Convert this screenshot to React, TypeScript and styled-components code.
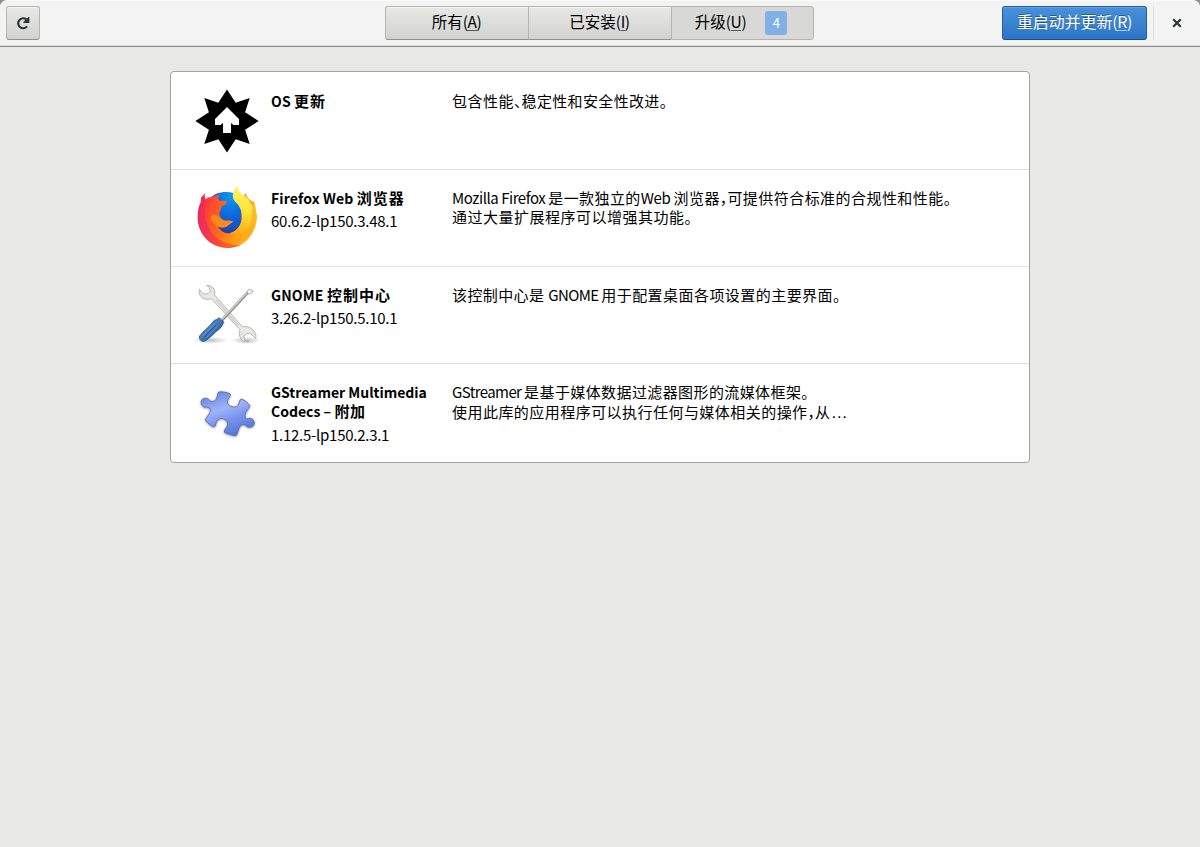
import React from "react";
import styled, { createGlobalStyle, css } from "styled-components";

const Global = createGlobalStyle`
  html, body { margin: 0; height: 100%; }
  body {
    background: #e8e8e6;
    color: #000;
    font-family: "Noto Sans CJK SC", sans-serif;
    font-size: 15px;
    overflow: hidden;
  }
  #root { height: 100%; }
  * { box-sizing: border-box; }
`;

const Window = styled.div`
  display: flex;
  flex-direction: column;
  height: 847px;
  background: #8f9190;
`;

const HeaderBar = styled.header`
  display: grid;
  grid-template-columns: 379px 429px 1fr;
  align-items: start;
  height: 47px;
  padding: 5px 6px 0;
  border-top: 1px solid #fafafa;
  border-bottom: 1px solid #8d8f8b;
  border-radius: 7px 7px 0 0;
  background: #f3f3f3;
  box-shadow: inset 0 -1px #dededc;
`;

const raised = css`
  border: 1px solid #b4b4b0;
  border-bottom-color: #8f918d;
  background: linear-gradient(#e8e8e7, #d2d2d0);
  box-shadow: inset 0 1px #f6f6f6;
`;

const RefreshButton = styled.button`
  ${raised}
  display: flex;
  align-items: center;
  justify-content: center;
  width: 34px;
  height: 34px;
  padding: 0 1px 0 0;
  border-radius: 3px;
`;

const Switcher = styled.nav`
  display: flex;
  height: 34px;
`;

const Tab = styled.button<{ $active?: boolean }>`
  ${raised}
  flex: 0 0 143px;
  display: flex;
  align-items: center;
  justify-content: center;
  gap: 19px;
  padding: 0 1px 5px 0;
  color: #000;
  font: inherit;
  font-size: 15.5px;
  line-height: 20px;
  border-right-width: 0;
  &:first-child { border-radius: 3px 0 0 3px; }
  &:last-child { border-radius: 0 3px 3px 0; border-right-width: 1px; }
  ${(p) => p.$active && css`
    background: #d8d8d6;
    border-color: #b4b4b0;
    box-shadow: none;
    padding-right: 3px;
  `}
`;

const Mnemonic = styled.span`
  letter-spacing: -0.4px;
  u {
    text-decoration: none;
    box-shadow: 0 1px color-mix(in srgb, currentColor 60%, transparent);
    display: inline-block;
    line-height: 17px;
  }
`;

const Count = styled.span`
  display: flex;
  align-items: center;
  justify-content: center;
  width: 22px;
  height: 24px;
  margin-top: 5px;
  border-radius: 3px;
  background: #80b0e6;
  color: #fff;
  font-size: 13px;
`;

const HeaderEnd = styled.div`
  display: flex;
  justify-content: flex-end;
`;

const SuggestedButton = styled.button`
  width: 145px;
  height: 34px;
  padding: 0 0 2px;
  border: 1px solid #1d5fa9;
  border-bottom-color: #184f8c;
  border-radius: 3px;
  background: linear-gradient(#4a90d9, #2a76c6);
  box-shadow: inset 0 1px #5f9fe0;
  color: #fff;
  font: inherit;
  font-size: 15.9px;
  line-height: 20px;
  text-shadow: 0 -1px rgba(0, 0, 0, 0.35);
`;

const CloseArea = styled.div`
  display: flex;
  align-items: center;
  justify-content: center;
  width: 41px;
  height: 34px;
  margin-left: 6px;
  padding-left: 5px;
  border-left: 1px solid #dcdcda;
`;

const Content = styled.main`
  flex: 1;
  padding-top: 24px;
  background: #e8e8e6;
`;

const UpdateList = styled.ul`
  width: 860px;
  margin: 0 auto;
  padding: 0;
  list-style: none;
  border: 1px solid #a3a3a0;
  border-radius: 4px;
  background: #fff;
`;

const Row = styled.li`
  display: grid;
  grid-template-columns: 64px 169px 1fr;
  column-gap: 12px;
  height: 97px;
  padding: 16px 24px 0;
  border-bottom: 1px solid #e0e0de;
  &:first-child { height: 98px; padding-top: 17px; }
  &:last-child { height: 98px; border-bottom: 0; }
`;

const Info = styled.div`
  padding-top: 2px;
`;

const Line = styled.div<{ $height?: number }>`
  height: ${(p) => p.$height ?? 19}px;
`;

const Name = styled.h2`
  margin: 0;
  font-size: 15px;
  font-weight: 700;
  line-height: 19px;
  white-space: pre;
  ${Line} + ${Line} { height: 20px; }
`;

const Version = styled.p`
  margin: 4px 0 0;
  font-size: 15px;
  line-height: 20px;
  letter-spacing: -0.26px;
`;

const Summary = styled.div`
  padding-top: 2px;
  line-height: 19.5px;
  white-space: pre;
`;

const Run = styled.span<{ $track?: number; $size?: number }>`
  letter-spacing: ${(p) => p.$track ?? 0}px;
  ${(p) => p.$size && css`font-size: ${p.$size}px;`}
`;

const Ellipsis = styled.span`
  font-family: "Liberation Sans", sans-serif;
  font-size: 17px;
  line-height: 1;
`;

const Icon = styled.svg`
  display: block;
  width: 64px;
  height: 64px;
`;

const UpdateIcon = () => (
  <Icon viewBox="0 0 64 64">
    <path d="M32 .6 40.7 13.7 54.7 9.1 50.1 23.3 63.6 32 50.1 40.7 54.7 54.9 40.7 50.3 32 63.6 23.3 50.3 9.3 54.9 13.9 40.7 .4 32 13.9 23.3 9.3 9.1 23.3 13.7Z" />
    <path fill="#fff" d="M32 18 44 30V36H38.5L36 34V44H28V34L25.5 36H20V30Z" />
  </Icon>
);

const FirefoxIcon = () => (
  <Icon viewBox="15 18 192 192">
    <defs>
      <linearGradient id="ffBody" x1="0" y1="0.3" x2="0.95" y2="0.6">
        <stop offset="0" stopColor="#f0254e" />
        <stop offset=".2" stopColor="#ff4a30" />
        <stop offset=".45" stopColor="#ff6a1c" />
        <stop offset=".75" stopColor="#ff9a10" />
        <stop offset="1" stopColor="#ffbd1c" />
      </linearGradient>
      <linearGradient id="ffEdge" x1="0" y1="0" x2="0.7" y2="1">
        <stop offset="0" stopColor="#e31587" stopOpacity="0" />
        <stop offset=".45" stopColor="#e31587" stopOpacity=".5" />
        <stop offset="1" stopColor="#ff0b50" stopOpacity=".4" />
      </linearGradient>
      <radialGradient id="ffGlobe" cx=".6" cy=".1" r=".95">
        <stop offset="0" stopColor="#0f98f0" />
        <stop offset=".4" stopColor="#0a70e0" />
        <stop offset=".75" stopColor="#1b4fc4" />
        <stop offset="1" stopColor="#2b2a7c" />
      </radialGradient>
      <linearGradient id="ffTail" x1=".4" y1="0" x2=".3" y2="1">
        <stop offset="0" stopColor="#fff36a" />
        <stop offset=".4" stopColor="#ffe43a" />
        <stop offset=".7" stopColor="#ffb81c" />
        <stop offset="1" stopColor="#ff8a12" />
      </linearGradient>
    </defs>
    <path fill="url(#ffGlobe)" d="M60 56C70 42 88 36 108 36C125 36 138 40 150 50L164 100L156 150L118 168L80 155L58 100Z" />
    <path fill="url(#ffBody)" d="M46 38C43 46 44 53 47 58C53 52 61 50 68 52C74 47 81 45 89 44C84 52 84 58 88 62L109 63C113 68 108 73 96 78C93 81 95 86 92 91C85 98 88 112 98 119C108 126 118 119 129 124C126 130 118 132 112 138C104 144 92 143 84 140C92 153 104 160 118 160C138 158 152 140 155 118L152 70L166 38C169 46 172 52 180 60L193 67L201 108C200 160 164 204 113 204C62 204 23 163 23 112C23 94 26 80 32 67L33 53C37 49 41 44 46 38Z" />
    <path fill="url(#ffEdge)" d="M32 67C26 80 23 94 23 112C23 163 62 204 113 204C128 204 142 200 153 195C113 198 76 180 58 147C43 119 44 84 47 57Z" />
    <path fill="#ff8a1a" d="M62 110C72 98 86 110 98 119C108 126 118 119 129 124C126 130 118 132 112 138C100 146 84 142 74 132C68 126 62 118 62 110Z" />
    <path fill="url(#ffTail)" d="M142 18C126 34 124 52 136 66C150 78 158 96 155 118C152 140 138 155 118 160C134 166 144 164 150 160C146 174 140 186 132 196C172 184 200 148 199 107C198 91 196 78 192 67C191 74 189 78 187 81C183 67 176 58 168 50C158 44 144 36 142 18Z" />
    <path fill="#ffae1c" d="M186 92C188 130 172 165 132 196C172 184 200 148 199 107C198 91 196 78 192 67C191 76 188 84 186 92Z" opacity=".75" />
  </Icon>
);

const ToolsIcon = () => (
  <Icon viewBox="15 15 192 192">
    <defs>
      <linearGradient id="steel" x1="0" y1="1" x2="1" y2="0">
        <stop offset="0" stopColor="#babdb6" />
        <stop offset=".5" stopColor="#e9e9e7" />
        <stop offset="1" stopColor="#c3c5c0" />
      </linearGradient>
      <linearGradient id="handle" x1=".2" y1=".2" x2=".8" y2=".8">
        <stop offset="0" stopColor="#2a62a5" />
        <stop offset=".4" stopColor="#4a82c0" />
        <stop offset="1" stopColor="#1e4f8d" />
      </linearGradient>
      <radialGradient id="toolShade">
        <stop offset="0" stopColor="#000" stopOpacity=".25" />
        <stop offset="1" stopColor="#000" stopOpacity="0" />
      </radialGradient>
    </defs>
    <ellipse cx="60" cy="187" rx="53" ry="11" fill="url(#toolShade)" />
    <ellipse cx="168" cy="187" rx="44" ry="11" fill="url(#toolShade)" />
    <path fill="url(#steel)" stroke="#9b9d98" strokeWidth="2" d="M50 22C65 20 77 33 74 51L157 146C175 142 194 153 198 173L197 182L183 168L171 166L162 174L164 187L177 191C163 195 149 185 148 169C147 163 148 159 150 155L64 62C47 68 32 61 28 46L28 34L41 48L54 47L61 39L58 29Z" />
    <path fill="none" stroke="#cfd1cc" strokeWidth="5" d="M78 66 145 142" />
    <path fill="none" stroke="#858782" strokeWidth="9" d="M94 128 174 43" />
    <path fill="none" stroke="#d3d3d1" strokeWidth="4.5" d="M93 127 173 42" />
    <path fill="#f0f0ee" stroke="#8d8f8a" strokeWidth="2" d="M170 42 178 33 187 37 188 43 178 49Z" />
    <path fill="url(#handle)" stroke="#204a87" strokeWidth="2.5" d="M87 119 102 133C96 139 98 146 88 153C71 165 60 182 43 190C34 192 26 184 29 174C38 160 55 150 67 134C74 123 80 127 87 119Z" />
    <path fill="none" stroke="#8ab4e2" strokeWidth="3" strokeLinecap="round" d="M38 174 73 138M50 178 83 144" opacity=".5" />
    <path fill="none" stroke="#204a87" strokeWidth="2.5" d="M42 178 79 140" />
  </Icon>
);

const PuzzleIcon = () => (
  <Icon viewBox="15 6 192 192">
    <defs>
      <linearGradient id="piece" x1=".2" y1="0" x2=".65" y2="1">
        <stop offset="0" stopColor="#6483e0" />
        <stop offset=".4" stopColor="#9fb3f8" />
        <stop offset=".65" stopColor="#7994ed" />
        <stop offset="1" stopColor="#5474d5" />
      </linearGradient>
      <filter id="pieceShade" x="-10%" y="-10%" width="120%" height="125%">
        <feDropShadow dx="0" dy="2" stdDeviation="3" floodOpacity=".45" />
      </filter>
    </defs>
    <path
      fill="url(#piece)"
      stroke="#5267a8"
      strokeWidth="2.5"
      strokeLinejoin="round"
      filter="url(#pieceShade)"
      d="M86 42C98 40 111 43 121 48C122 58 109 64 113 76C117 86 135 91 143 83C150 77 146 66 154 63C165 67 173 74 180 83C176 94 165 101 165 113C165 121 172 125 178 121C188 119 195 130 192 139C189 149 175 151 168 143C162 137 151 140 148 149C144 157 143 167 138 173C125 172 113 168 103 163C101 153 114 149 113 136C111 123 93 117 83 126C75 133 80 144 72 147C61 142 52 135 46 126C50 115 62 106 61 96C60 86 50 87 45 88C35 86 30 73 36 65C43 58 54 60 59 67C64 73 76 70 79 62C83 55 82 48 86 42Z"
    />
  </Icon>
);

type TextRun = [text: string, track: number, size?: number];

interface Update {
  icon: React.ReactNode;
  name: TextRun[][];
  version?: string;
  summary: TextRun[][];
  leading?: number;
}

const updates: Update[] = [
  {
    icon: <UpdateIcon />,
    name: [[["OS ", 0.1, 14], ["更新", 0.9]]],
    summary: [[["包含性能", 0.5], ["、", -7.5], ["稳定性和安全性改进。", 0.35]]],
  },
  {
    icon: <FirefoxIcon />,
    name: [[["Firefox Web ", 0.15, 14], ["浏览器", 0.9]]],
    version: "60.6.2-lp150.3.48.1",
    summary: [
      [["Mozilla Firefox ", -0.45], ["是一款独立的", 0.4], ["Web ", -0.3], ["浏览器", 0.4], ["，", -7.4], ["可提供符合标准的合规性和性能。", 0.45]],
      [["通过大量扩展程序可以增强其功能。", 0.5]],
    ],
  },
  {
    icon: <ToolsIcon />,
    name: [[["GNOME ", 0.15, 14], ["控制中心", 1]]],
    version: "3.26.2-lp150.5.10.1",
    summary: [[["该控制中心是 ", 0.4], ["GNOME ", -0.6], ["用于配置桌面各项设置的主要界面。", 0.45]]],
  },
  {
    icon: <PuzzleIcon />,
    name: [[["GStreamer Multimedia", 0, 14]], [["Codecs – ", 0, 14], ["附加", 0.7]]],
    version: "1.12.5-lp150.2.3.1",
    summary: [
      [["GStreamer ", -0.6], ["是基于媒体数据过滤器图形的流媒体框架。", 0.4]],
      [["使用此库的应用程序可以执行任何与媒体相关的操作", 0.46], ["，", -7.5], ["从", 0.5], ["…", 0]],
    ],
    leading: 20,
  },
];

const Lines = ({ lines, leading }: { lines: TextRun[][]; leading?: number }) => (
  <>
    {lines.map((runs, i) => (
      <Line key={i} $height={leading}>
        {runs.map(([text, track, size], j) =>
          text === "…" ? <Ellipsis key={j}>{text}</Ellipsis> : <Run key={j} $track={track} $size={size}>{text}</Run>
        )}
      </Line>
    ))}
  </>
);

const Label = ({ text, hint }: { text: string; hint: string }) => (
  <span>{text}<Mnemonic>(<u>{hint}</u>)</Mnemonic></span>
);

export default function App() {
  return (
    <Window>
      <Global />
      <HeaderBar>
        <RefreshButton aria-label="刷新">
          <svg width="16" height="16" viewBox="0 0 16 16">
            <path d="M12.1 11.4A5 5 0 1 1 11.4 4.4" fill="none" stroke="#2e3436" strokeWidth="2.2" />
            <path d="M14.4 2V8H8.4V7L13.4 2Z" fill="#2e3436" />
          </svg>
        </RefreshButton>
        <Switcher>
          <Tab><Label text="所有" hint="A" /></Tab>
          <Tab><Label text="已安装" hint="I" /></Tab>
          <Tab $active><Label text="升级" hint="U" /><Count>4</Count></Tab>
        </Switcher>
        <HeaderEnd>
          <SuggestedButton><Label text="重启动并更新" hint="R" /></SuggestedButton>
          <CloseArea>
            <svg width="10" height="10" viewBox="0 0 10 10">
              <path d="M1.2 1.2 8.8 8.8M8.8 1.2 1.2 8.8" stroke="#2e3436" strokeWidth="2.2" />
            </svg>
          </CloseArea>
        </HeaderEnd>
      </HeaderBar>
      <Content>
        <UpdateList>
          {updates.map((u, i) => (
            <Row key={i}>
              {u.icon}
              <Info>
                <Name><Lines lines={u.name} /></Name>
                {u.version && <Version>{u.version}</Version>}
              </Info>
              <Summary><Lines lines={u.summary} leading={u.leading} /></Summary>
            </Row>
          ))}
        </UpdateList>
      </Content>
    </Window>
  );
}
